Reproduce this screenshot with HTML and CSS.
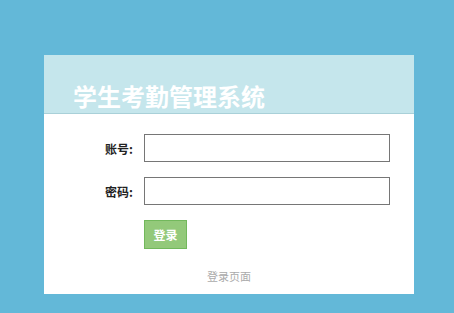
FILE: index.html
```
<!DOCTYPE html>
<html>
<head>
  <meta charset="utf-8">
  <title>学生考勤管理系统</title>
  <link rel="stylesheet" href="styles.css">
</head>
<body>
  <div class="login-box">
    <div class="header">
      <h1>学生考勤管理系统</h1>
    </div>
    <form class="login-form">
      <div class="form-row">
        <label for="account">账号:</label>
        <input type="text" id="account">
      </div>
      <div class="form-row">
        <label for="password">密码:</label>
        <input type="password" id="password">
      </div>
      <div class="form-row">
        <span></span>
        <button type="button" class="btn-login">登录</button>
      </div>
    </form>
    <div class="footer">登录页面</div>
  </div>
</body>
</html>
```
FILE: styles.css
```
body {
  margin: 0;
  background-color: #63b8d8;
  font-family: "Noto Sans CJK SC", "Liberation Sans", sans-serif;
}
.login-box {
  width: 370px;
  margin: 55px 0 0 44px;
  background-color: #fff;
  padding-bottom: 9px;
}
.header {
  height: 58px;
  background-color: #c5e6ec;
  border-bottom: 1px solid #a9d0d8;
  display: flex;
  align-items: flex-end;
  padding-left: 29px;
}
.header h1 {
  margin: 0 0 1px 0;
  font-size: 24px;
  line-height: 32px;
  color: #fff;
  font-weight: bold;
}
.login-form {
  display: flex;
  flex-direction: column;
  gap: 15px;
  padding-top: 20px;
}
.form-row {
  display: grid;
  grid-template-columns: 89px 246px;
  column-gap: 11px;
  align-items: center;
}
.form-row label {
  text-align: right;
  font-size: 12px;
  font-weight: bold;
  color: #222;
}
.form-row input {
  box-sizing: border-box;
  width: 246px;
  height: 28px;
  margin: 0;
  border: 1px solid #767676;
  padding: 0 4px;
}
.btn-login {
  justify-self: start;
  width: 43px;
  height: 29px;
  padding: 0;
  border: 1px solid #72b85c;
  background-color: #93c97a;
  color: #fff;
  font-size: 12px;
  font-weight: bold;
  font-family: inherit;
  cursor: pointer;
}
.footer {
  margin-top: 19px;
  text-align: center;
  font-size: 11px;
  line-height: 17px;
  color: #aaa;
}
```
